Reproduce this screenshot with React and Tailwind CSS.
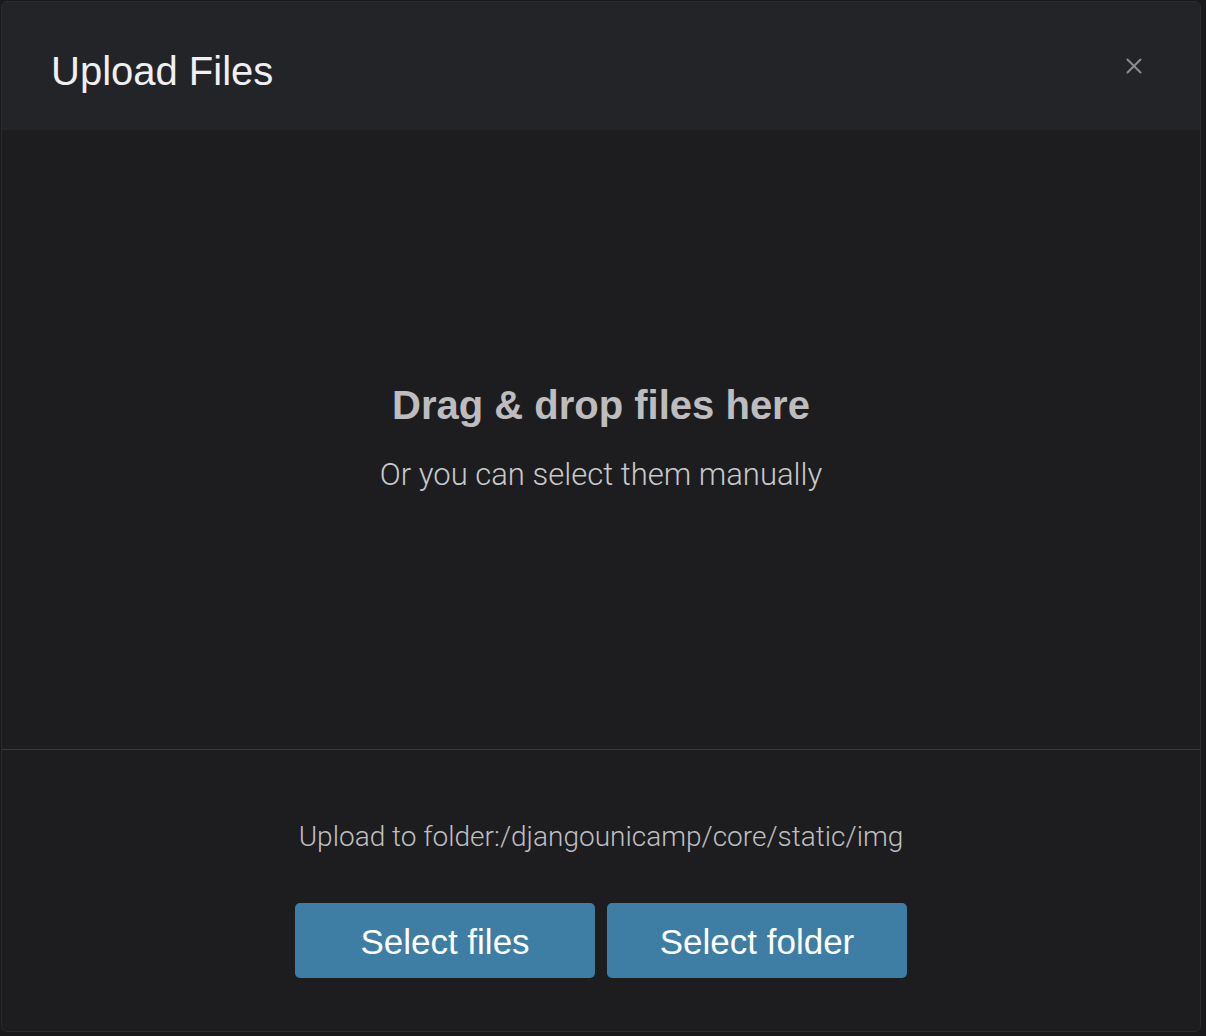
import { X } from "lucide-react";

function App() {
  return (
    <div className="w-[1206px] h-[1036px] bg-[#19191b] pt-px pl-px font-['Liberation_Sans',Arial,sans-serif]">
      <div className="w-[1200px] h-[1031px] rounded-md border border-[#2a2b2e] overflow-hidden flex flex-col bg-[#1d1d1f]">
        <div className="h-[128px] shrink-0 bg-[#232428] flex items-center justify-between pl-[49px] pr-[53px] pt-[10px]">
          <h1 className="text-[40px] leading-none text-[#f0f0f3]">Upload Files</h1>
          <button className="text-[#8c8d90] -mt-[10px]">
            <X size={26} strokeWidth={1.8} />
          </button>
        </div>

        <div className="h-[620px] shrink-0 flex flex-col items-center justify-center border-b border-[#38393b] pb-[4px]">
          <p className="text-[40px] leading-none font-bold text-[#bdbdbf]">Drag &amp; drop files here</p>
          <p className="mt-[34px] text-[31px] leading-none font-light text-[#c9c9cb] font-['Roboto',sans-serif]">
            Or you can select them manually
          </p>
        </div>

        <div className="flex-1 flex flex-col items-center pt-[73px]">
          <p className="text-[28px] leading-none font-light text-[#bfbfc1] font-['Roboto',sans-serif]">
            Upload to folder:/djangounicamp/core/static/img
          </p>
          <div className="mt-[52px] flex gap-[12px]">
            <button className="w-[300px] h-[75px] pt-[3px] rounded-[5px] bg-[#3e7ea5] text-white text-[35px]">
              Select files
            </button>
            <button className="w-[300px] h-[75px] pt-[3px] rounded-[5px] bg-[#3e7ea5] text-white text-[35px]">
              Select folder
            </button>
          </div>
        </div>
      </div>
    </div>
  );
}

export default App;
